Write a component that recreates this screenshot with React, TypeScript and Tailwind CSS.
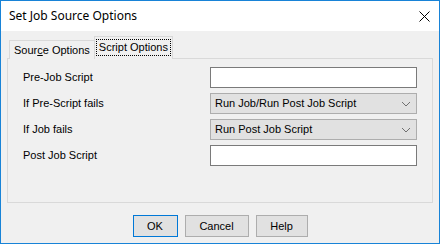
import React from "react";

const ui = { fontFamily: '"Liberation Sans", Arial, sans-serif' };
const title = { fontFamily: '"Noto Sans", "Liberation Sans", sans-serif' };

const Chevron = () => (
   <svg width="10" height="6" viewBox="0 0 10 6" className="text-[#707070]">
      <path d="M1 1 L5 5 L9 1" fill="none" stroke="currentColor" strokeWidth="1" />
   </svg>
);

const TextBox = () => <div className="h-[21px] w-[207px] border border-[#7a7a7a] bg-white" />;

const Select = ({ value }: { value: string }) => (
   <div className="flex h-[21px] w-[207px] items-center justify-between border border-[#adadad] bg-[#e1e1e1] pl-[4px] pr-[5px] text-[11px] text-black">
      <span>{value}</span>
      <Chevron />
   </div>
);

const Row = ({ label, children }: { label: string; children: React.ReactNode }) => (
   <div className="flex h-[21px] items-center justify-between">
      <span className="text-[11px] text-black">{label}</span>
      {children}
   </div>
);

export default function App() {
   return (
      <div className="flex h-[244px] w-[440px] flex-col border border-[#1883d7] bg-[#f0f0f0]" style={ui}>
         {/* title bar */}
         <div className="flex h-[30px] items-center justify-between bg-white pl-[8px] pr-[9px]">
            <span className="text-[12px] text-black" style={title}>Set Job Source Options</span>
            <svg width="11" height="11" viewBox="0 0 11 11">
               <path d="M0.5 0.5 L10.5 10.5 M10.5 0.5 L0.5 10.5" stroke="#000" strokeWidth="1" />
            </svg>
         </div>

         <div className="flex flex-1 flex-col px-[6px] pt-[6px]">
            {/* tabs */}
            <div className="relative z-10 flex h-[22px] items-end pl-[2px]">
               <div className="flex h-[19px] items-center border border-b-0 border-[#d9d9d9] bg-[#f0f0f0] pl-[4px] pr-[4px] text-[11px] text-black">
                  Sour<span className="underline">c</span>e Options
               </div>
               <div className="-ml-[1px] flex h-[23px] items-center border border-b-0 border-[#d9d9d9] bg-[#f0f0f0] px-[1px] pb-[2px] text-[11px] text-black">
                  <span className="border border-dotted border-black px-[2px] leading-[15px]">Script Options</span>
               </div>
            </div>

            {/* panel */}
            <div className="-mt-[1px] flex h-[145px] w-[426px] flex-col gap-[5px] border border-[#d9d9d9] px-[15px] pt-[8px]">
               <Row label="Pre-Job Script"><TextBox /></Row>
               <Row label="If Pre-Script fails"><Select value="Run Job/Run Post Job Script" /></Row>
               <Row label="If Job fails"><Select value="Run Post Job Script" /></Row>
               <Row label="Post Job Script"><TextBox /></Row>
            </div>

            {/* buttons */}
            <div className="mt-[12px] flex justify-center gap-[7px] text-[11px] text-black">
               <button className="h-[22px] w-[45px] border border-[#0078d7] bg-[#e1e1e1]">OK</button>
               <button className="h-[22px] w-[64px] border border-[#adadad] bg-[#e1e1e1]">Cancel</button>
               <button className="h-[22px] w-[52px] border border-[#adadad] bg-[#e1e1e1]">Help</button>
            </div>
         </div>
      </div>
   );
}
